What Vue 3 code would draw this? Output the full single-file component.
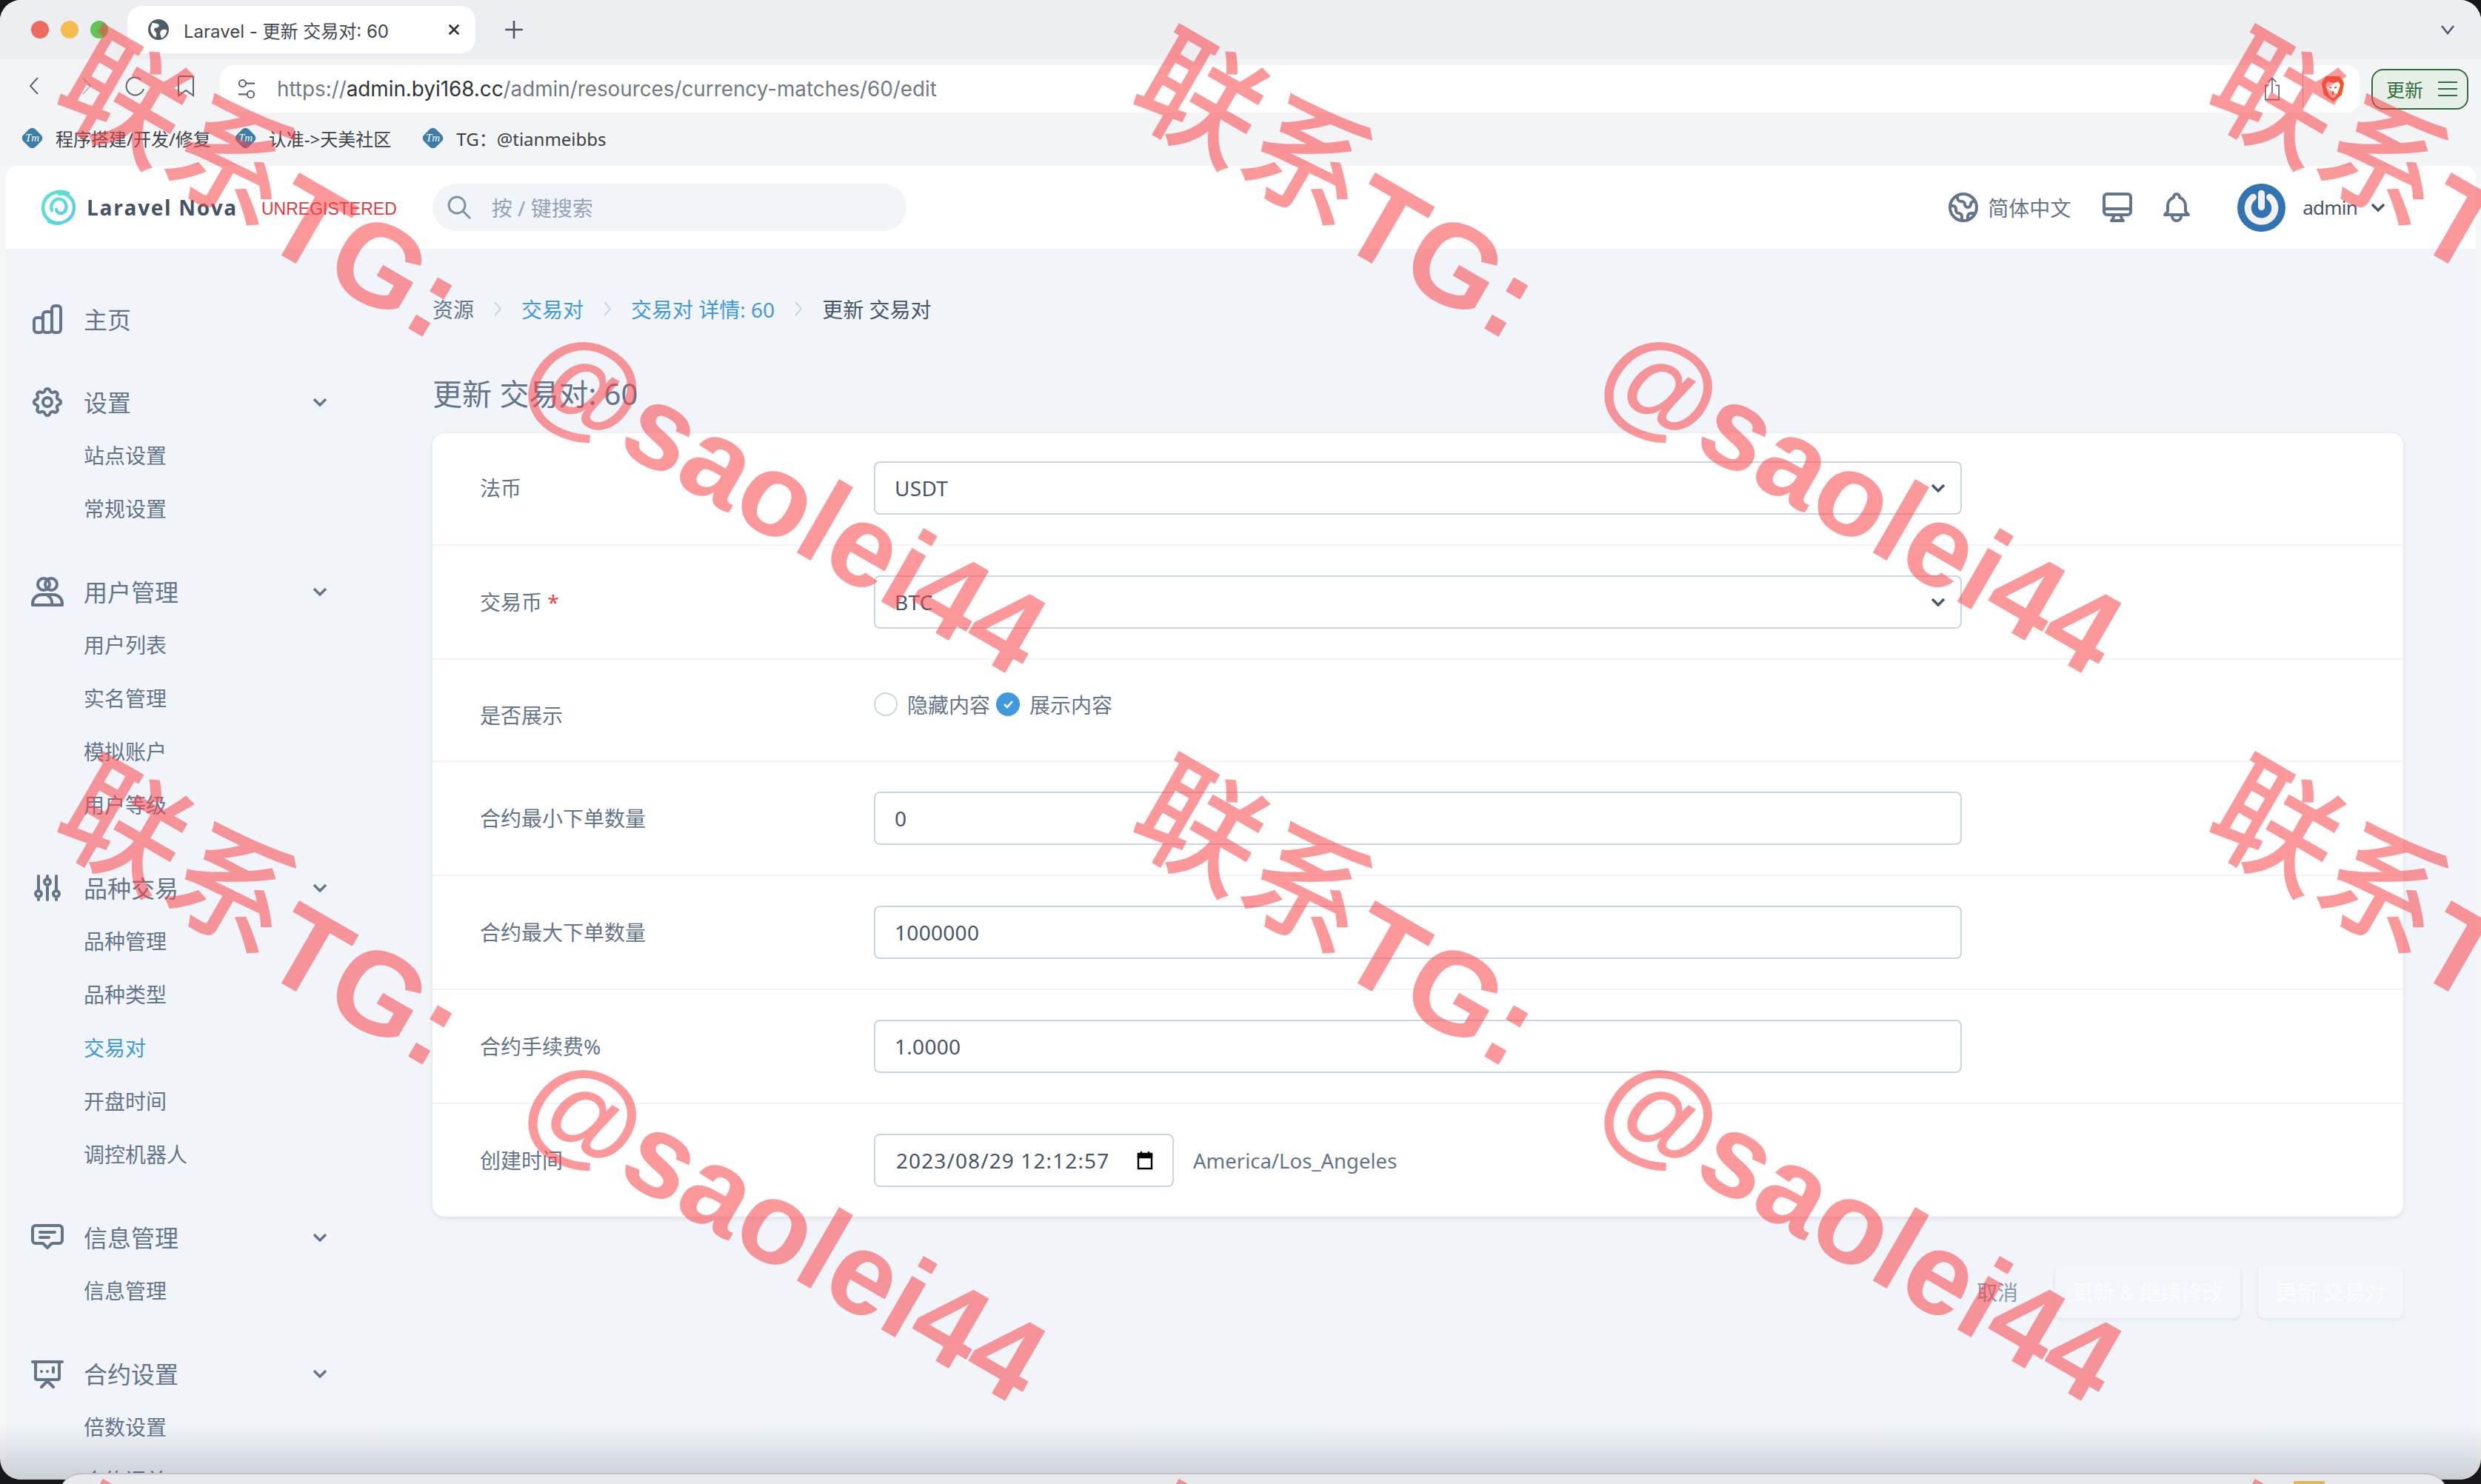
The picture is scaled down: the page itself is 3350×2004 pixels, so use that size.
<template>
  <div class="screen">
    <div class="window">
      <div class="tabstrip">
        <div class="lights">
          <span class="light red"></span>
          <span class="light yellow"></span>
          <span class="light green"></span>
        </div>
        <div class="tab">
          <svg class="tab-globe" viewBox="0 0 24 24"><circle cx="12" cy="12" r="12" fill="#4f5b66" /><path d="M5 4c3 1 5 0 7 2s-1 4-3 4-3 2-1 4 2 4 1 7C5 19 2 14 3 9zM15 13c3-2 5-1 7 0-1 4-3 7-6 9-2-3-3-7-1-9z" fill="#fff" /></svg>
          <span class="tab-title">Laravel - 更新 交易对: 60</span>
          <svg class="tab-close" viewBox="0 0 20 20"><path d="M3 3l14 14M17 3L3 17" /></svg>
        </div>
        <svg class="tab-plus" viewBox="0 0 24 24"><path d="M12 1v22M1 12h22" /></svg>
        <svg class="tab-menu" viewBox="0 0 20 14"><path d="M2 2l8 10 8-10" /></svg>
      </div>

      <div class="toolbar">
        <svg class="nav-icon back" viewBox="0 0 16 26"><path d="M13 2L3 13l10 11" /></svg>
        <svg class="nav-icon forward" viewBox="0 0 16 26"><path d="M3 2l10 11L3 24" /></svg>
        <svg class="nav-icon reload" viewBox="0 0 28 28"><path d="M21 5a12 12 0 1 0 4 13" /></svg>
        <svg class="nav-icon mark" viewBox="0 0 24 30"><path d="M2 4a2 2 0 0 1 2-2h16a2 2 0 0 1 2 2v24l-10-7-10 7z" /></svg>
        <div class="urlbar">
          <svg class="site-icon" viewBox="0 0 26 30"><circle cx="7" cy="7" r="5" /><circle cx="19" cy="23" r="5" /><path d="M12 7h13M1 23h13" /></svg>
          <span class="url"><span class="url-dim">https://</span>admin.byi168.cc<span class="url-dim">/admin/resources/currency-matches/60/edit</span></span>
          <svg class="share-icon" viewBox="0 0 24 36"><path d="M7 13H2v21h20V13h-5M12 24V2M6 8l6-6 6 6" /></svg>
          <span class="url-divider"></span>
          <svg class="brave" viewBox="0 0 32 36">
            <path d="M7 1h18l4 5 2 5-3 15-12 9-12-9L1 11l2-5z" fill="#f1571f" />
            <path d="M9 8l7 2 7-2 3 5-3 9-3 6-4 3-4-3-3-6-3-9z" fill="#fff" />
            <path d="M11 15l3 2M21 15l-3 2M16 21v5" stroke="#f1571f" stroke-width="2" fill="none" />
          </svg>
        </div>
        <div class="update-btn">
          <span>更新</span>
          <svg viewBox="0 0 28 22"><path d="M1 2h26M1 11h26M1 20h26" /></svg>
        </div>
      </div>

      <div class="bookmarks">
        <div v-for="mark in bookmarks" :key="mark" class="bookmark">
          <span class="tm"><i>Tm</i></span>
          <span>{{ mark }}</span>
        </div>
      </div>

      <div class="app">
        <header class="app-header">
          <svg class="logo" viewBox="0 0 46 48">
            <defs>
              <linearGradient id="nova" x1="0" y1="0" x2="1" y2="1">
                <stop offset="0" stop-color="#5be7c9" />
                <stop offset="1" stop-color="#5cc8f2" />
              </linearGradient>
            </defs>
            <g fill="none" stroke="url(#nova)" stroke-linecap="round" stroke-width="4.4">
              <path d="M36 5C22-1 3 6 2 24c0 14 12 23 24 21" />
              <path d="M10 43c14 7 34-1 34-19 0-12-10-20-20-18" />
              <path d="M14 28c-3-9 4-17 12-15 7 2 10 11 5 17-4 4-10 2-11-3" />
            </g>
          </svg>
          <span class="brand">Laravel Nova</span>
          <span class="unregistered">UNREGISTERED</span>
          <div class="search">
            <svg viewBox="0 0 32 32"><circle cx="13" cy="13" r="11" /><path d="M21 21l10 10" /></svg>
            <span>按 / 键搜索</span>
          </div>
          <div class="header-right">
            <svg class="head-icon globe" viewBox="0 0 24 24"><path d="M3.055 11H5a2 2 0 012 2v1a2 2 0 002 2 2 2 0 012 2v2.945M8 3.935V5.5A2.5 2.5 0 0010.5 8h.5a2 2 0 012 2 2 2 0 104 0 2 2 0 012-2h1.064M15 20.488V18a2 2 0 012-2h3.064M21 12a9 9 0 11-18 0 9 9 0 0118 0z" /></svg>
            <span class="lang">简体中文</span>
            <svg class="head-icon desktop" viewBox="0 0 24 24"><path d="M9.75 17L9 20l-1 1h8l-1-1-.75-3M3 13h18M5 17h14a2 2 0 002-2V5a2 2 0 00-2-2H5a2 2 0 00-2 2v10a2 2 0 002 2z" /></svg>
            <svg class="head-icon bell" viewBox="0 0 24 24"><path d="M15 17h5l-1.405-1.405A2.032 2.032 0 0118 14.158V11a6.002 6.002 0 00-4-5.659V5a2 2 0 10-4 0v.341C7.67 6.165 6 8.388 6 11v3.159c0 .538-.214 1.055-.595 1.436L4 17h5m6 0v1a3 3 0 11-6 0v-1m6 0H9" /></svg>
            <svg class="avatar" viewBox="0 0 64 64">
              <circle cx="32" cy="32" r="32" fill="#3273b4" />
              <path d="M21 18a18 18 0 1 0 22 0" fill="none" stroke="#f2f2f2" stroke-width="9" stroke-linecap="round" />
              <path d="M32 13v18" stroke="#f2f2f2" stroke-width="9" stroke-linecap="round" />
            </svg>
            <span class="user">admin</span>
            <svg class="user-chevron" viewBox="0 0 20 12"><path d="M2 2l8 8 8-8" /></svg>
          </div>
        </header>

        <div class="body">
          <aside class="sidebar">
            <div v-for="group in menu" :key="group.title" class="menu-group">
              <div class="menu-head">
                <svg class="menu-icon" viewBox="0 0 24 24" v-html="group.icon"></svg>
                <span>{{ group.title }}</span>
                <svg v-if="group.items.length" class="menu-chevron" viewBox="0 0 20 12"><path d="M2 2l8 8 8-8" /></svg>
              </div>
              <div
                v-for="item in group.items"
                :key="item"
                class="menu-item"
                :class="{ active: item === '交易对' }"
              >{{ item }}</div>
            </div>
          </aside>

          <main class="main">
            <nav class="crumbs">
              <template v-for="(crumb, i) in crumbs" :key="crumb.text">
                <svg v-if="i > 0" class="crumb-sep" viewBox="0 0 12 24"><path d="M2 3l8 9-8 9" /></svg>
                <span :class="{ link: crumb.link, current: i === crumbs.length - 1 }">{{ crumb.text }}</span>
              </template>
            </nav>
            <h1 class="title">更新 交易对: 60</h1>

            <div class="card">
              <div class="row first">
                <label>法币</label>
                <div class="input select">USDT<svg viewBox="0 0 20 12"><path d="M2 2l8 8 8-8" /></svg></div>
              </div>
              <div class="row">
                <label>交易币 <em>*</em></label>
                <div class="input select">BTC<svg viewBox="0 0 20 12"><path d="M2 2l8 8 8-8" /></svg></div>
              </div>
              <div class="row row-radio">
                <label>是否展示</label>
                <div class="radios">
                  <span class="radio"></span>
                  <span class="radio-text">隐藏内容</span>
                  <span class="radio checked"><svg viewBox="0 0 20 20"><path d="M5 10l4 4 7-8" /></svg></span>
                  <span class="radio-text">展示内容</span>
                </div>
              </div>
              <div v-for="field in numberFields" :key="field.label" class="row">
                <label>{{ field.label }}</label>
                <div class="input">{{ field.value }}</div>
              </div>
              <div class="row last">
                <label>创建时间</label>
                <div class="input date">
                  <span>2023/08/29 12:12:57</span>
                  <svg viewBox="0 0 22 26"><path d="M2 5h18v19H2zM6 1v5M16 1v5" /><path class="fill" d="M2 4h18v5H2z" /></svg>
                </div>
                <span class="zone">America/Los_Angeles</span>
              </div>
            </div>

            <div class="actions">
              <span class="cancel">取消</span>
              <span class="btn wide">更新 &amp; 继续修改</span>
              <span class="btn">更新 交易对</span>
            </div>
          </main>
        </div>
      </div>
      <div class="window-shade"></div>
    </div>

    <div class="back-window"><span class="back-chip"></span></div>

    <div class="watermarks">
      <span
        v-for="mark in watermarks"
        :key="mark.id"
        class="watermark"
        :style="{ left: mark.x + 'px', top: mark.y + 'px' }"
      ><span class="watermark-cjk">联系</span>TG: @saolei44</span>
    </div>
  </div>
</template>

<script setup>
const bookmarks = ['程序搭建/开发/修复', '认准->天美社区', 'TG：@tianmeibbs'];

const icons = {
  chart: '<path d="M9 19v-6a2 2 0 00-2-2H5a2 2 0 00-2 2v6a2 2 0 002 2h2a2 2 0 002-2zm0 0V9a2 2 0 012-2h2a2 2 0 012 2v10m-6 0a2 2 0 002 2h2a2 2 0 002-2m0 0V5a2 2 0 012-2h2a2 2 0 012 2v14a2 2 0 01-2 2h-2a2 2 0 01-2-2z"/>',
  cog: '<path d="M10.325 4.317c.426-1.756 2.924-1.756 3.35 0a1.724 1.724 0 002.573 1.066c1.543-.94 3.31.826 2.37 2.37a1.724 1.724 0 001.065 2.572c1.756.426 1.756 2.924 0 3.35a1.724 1.724 0 00-1.066 2.573c.94 1.543-.826 3.31-2.37 2.37a1.724 1.724 0 00-2.572 1.065c-.426 1.756-2.924 1.756-3.35 0a1.724 1.724 0 00-2.573-1.066c-1.543.94-3.31-.826-2.37-2.37a1.724 1.724 0 00-1.065-2.572c-1.756-.426-1.756-2.924 0-3.35a1.724 1.724 0 001.066-2.573c-.94-1.543.826-3.31 2.37-2.37.996.608 2.296.07 2.572-1.065z"/><path d="M15 12a3 3 0 11-6 0 3 3 0 016 0z"/>',
  users: '<circle cx="9.5" cy="7" r="4"/><circle cx="14.5" cy="7" r="4"/><path d="M2 21v-1a6 6 0 016-6h8a6 6 0 016 6v1zM12 14.5a6 6 0 013 6.5"/>',
  sliders: '<path d="M12 6V4m0 2a2 2 0 100 4m0-4a2 2 0 110 4m-6 8a2 2 0 100-4m0 4a2 2 0 110-4m0 4v2m0-6V4m6 6v10m6-2a2 2 0 100-4m0 4a2 2 0 110-4m0 4v2m0-6V4"/>',
  message: '<path d="M4 4h16a2 2 0 012 2v8a2 2 0 01-2 2h-5l-3 3-3-3H4a2 2 0 01-2-2V6a2 2 0 012-2zM7 8.5h10M7 12h6"/>',
  screen: '<path d="M2 4h20M4 4v11a1 1 0 001 1h14a1 1 0 001-1V4M8 21l4-4 4 4M8 10.5v.01M12 10.5v.01M16 8v3"/>'
};

const menu = [
  { title: '主页', icon: icons.chart, items: [] },
  { title: '设置', icon: icons.cog, items: ['站点设置', '常规设置'] },
  { title: '用户管理', icon: icons.users, items: ['用户列表', '实名管理', '模拟账户', '用户等级'] },
  { title: '品种交易', icon: icons.sliders, items: ['品种管理', '品种类型', '交易对', '开盘时间', '调控机器人'] },
  { title: '信息管理', icon: icons.message, items: ['信息管理'] },
  { title: '合约设置', icon: icons.screen, items: ['倍数设置', '合约调单'] }
];

const crumbs = [
  { text: '资源', link: false },
  { text: '交易对', link: true },
  { text: '交易对 详情: 60', link: true },
  { text: '更新 交易对', link: false }
];

const numberFields = [
  { label: '合约最小下单数量', value: '0' },
  { label: '合约最大下单数量', value: '1000000' },
  { label: '合约手续费%', value: '1.0000' }
];

// the watermark repeats on a fixed grid, so its tiles come from a loop
const watermarks = [];
for (let row = 0; row < 3; row++) {
  for (let col = 0; col < 3; col++) {
    watermarks.push({ id: row + '-' + col, x: 86 + col * 1453, y: 24 + row * 983 });
  }
}
</script>

<style>
html,
body {
  margin: 0;
  background: #000;
}
</style>

<style scoped>
.screen {
  position: relative;
  width: 3350px;
  height: 2004px;
  overflow: hidden;
  background: #17171c;
  font-family: "Noto Sans", "Noto Sans CJK SC", sans-serif;
  color: #64748b;
}

.window {
  position: relative;
  display: flex;
  flex-direction: column;
  height: 1998px;
  border-radius: 28px;
  overflow: hidden;
  background: #f5f6f8;
}

.tabstrip {
  display: flex;
  align-items: center;
  flex: none;
  height: 80px;
  background: #edeef2;
}

.lights {
  display: flex;
  gap: 16px;
  margin-left: 42px;
  margin-right: 26px;
}

.light {
  width: 24px;
  height: 24px;
  border-radius: 50%;
}

.red { background: #ee6a5e; }
.yellow { background: #f5bd4f; }
.green { background: #61c454; }

.tab {
  display: flex;
  align-items: center;
  width: 470px;
  height: 64px;
  padding: 0 20px 0 28px;
  box-sizing: border-box;
  border-radius: 20px;
  background: #fff;
}

.tab-globe {
  width: 28px;
  height: 28px;
}

.tab-title {
  flex: 1;
  margin-left: 20px;
  font-family: "Inter", "Noto Sans CJK SC", sans-serif;
  font-size: 24px;
  color: #3f4650;
}

.tab-close {
  width: 18px;
  height: 18px;
  fill: none;
  stroke: #333;
  stroke-width: 3;
}

.tab-plus {
  width: 26px;
  height: 26px;
  margin-left: 39px;
  fill: none;
  stroke: #4d5560;
  stroke-width: 2.4;
}

.tab-menu {
  width: 20px;
  height: 14px;
  margin-left: auto;
  margin-right: 35px;
  fill: none;
  stroke: #4f5a66;
  stroke-width: 2.6;
}

.toolbar {
  display: flex;
  align-items: center;
  flex: none;
  height: 72px;
  padding-right: 17px;
  background: #f3f4f6;
}

.nav-icon {
  flex: none;
  fill: none;
  stroke: #5a6572;
  stroke-width: 2;
}

.back {
  width: 16px;
  height: 26px;
  margin-left: 38px;
}

.forward {
  width: 16px;
  height: 26px;
  margin-left: 55px;
  stroke: #b7bfc9;
}

.reload {
  width: 28px;
  height: 28px;
  margin-left: 44px;
}

.mark {
  width: 24px;
  height: 30px;
  margin-left: 42px;
}

.urlbar {
  display: flex;
  align-items: center;
  flex: 1;
  height: 64px;
  margin-left: 34px;
  margin-top: 8px;
  border-radius: 18px;
  background: #fff;
}

.site-icon {
  width: 24px;
  height: 28px;
  margin-left: 24px;
  fill: none;
  stroke: #5d6670;
  stroke-width: 2.2;
}

.url {
  flex: 1;
  margin-left: 29px;
  font-family: "Inter", sans-serif;
  font-size: 27.8px;
  color: #2f343a;
}

.url-dim {
  color: #727a84;
}

.share-icon {
  width: 22px;
  height: 34px;
  fill: none;
  stroke: #5f6670;
  stroke-width: 1.8;
}

.url-divider {
  width: 1px;
  height: 50px;
  margin: 0 24px 0 30px;
  background: #aab0b8;
}

.brave {
  width: 32px;
  height: 36px;
  margin-right: 20px;
}

.update-btn {
  display: flex;
  align-items: center;
  justify-content: space-between;
  width: 131px;
  height: 55px;
  margin-left: 16px;
  margin-top: 8px;
  padding: 0 12px 0 18px;
  box-sizing: border-box;
  border: 2px solid #336b3e;
  border-radius: 16px;
  background: #e6efe8;
  font-size: 25px;
  color: #336b3e;
}

.update-btn svg {
  width: 28px;
  height: 22px;
  fill: none;
  stroke: #336b3e;
  stroke-width: 2;
}

.bookmarks {
  display: flex;
  align-items: center;
  flex: none;
  height: 72px;
  padding: 0 0 3px 29px;
  box-sizing: border-box;
  background: #f3f4f6;
  font-size: 24px;
  color: #3c4148;
}

.bookmark {
  display: flex;
  align-items: center;
  gap: 17px;
}

.bookmark:nth-child(1) {
  margin-right: 32px;
}

.bookmark:nth-child(2) {
  margin-right: 42px;
}

.tm {
  display: flex;
  align-items: center;
  justify-content: center;
  width: 23px;
  height: 23px;
  margin: 0 3px;
  border-radius: 6px;
  background: #3c7ea8;
  transform: rotate(45deg);
  color: #fff;
  font-family: "Liberation Serif", serif;
  font-size: 15px;
}

.tm i {
  transform: rotate(-45deg);
}

.app {
  display: flex;
  flex: 1;
  flex-direction: column;
  min-height: 0;
  margin: 0 7px 0 8px;
  border-radius: 16px 16px 0 0;
  overflow: hidden;
  background: #f1f5fa;
}

.app-header {
  display: flex;
  align-items: center;
  flex: none;
  height: 112px;
  background: #fff;
}

.logo {
  width: 46px;
  height: 48px;
  margin-left: 48px;
}

.brand {
  margin-left: 15px;
  font-family: "Open Sans", sans-serif;
  font-size: 28px;
  font-weight: 700;
  letter-spacing: 1.7px;
  color: #465365;
}

.unregistered {
  margin-left: 32px;
  margin-top: 4px;
  font-family: "Liberation Sans", sans-serif;
  font-size: 23px;
  color: #e0393e;
}

.search {
  display: flex;
  align-items: center;
  width: 640px;
  height: 64px;
  margin-left: 48px;
  border-radius: 32px;
  background: #f1f5f9;
  font-size: 28px;
  color: #94a3b8;
}

.search svg {
  width: 32px;
  height: 32px;
  margin-left: 20px;
  margin-right: 28px;
  fill: none;
  stroke: #8492a6;
  stroke-width: 3;
}

.header-right {
  display: flex;
  align-items: center;
  margin-left: auto;
  margin-right: 122px;
}

.head-icon {
  fill: none;
  stroke: #64748b;
  stroke-width: 2;
  stroke-linecap: round;
  stroke-linejoin: round;
}

.globe {
  width: 48px;
  height: 48px;
}

.lang {
  margin-left: 9px;
  font-size: 28px;
}

.desktop {
  width: 48px;
  height: 48px;
  margin-left: 39px;
}

.bell {
  width: 48px;
  height: 48px;
  margin-left: 32px;
}

.avatar {
  width: 65px;
  height: 65px;
  margin-left: 58px;
}

.user {
  margin-left: 23px;
  font-size: 26px;
  letter-spacing: -0.8px;
  color: #475569;
}

.user-chevron {
  width: 20px;
  height: 12px;
  margin-left: 18px;
  fill: none;
  stroke: #475569;
  stroke-width: 3.4;
}

.body {
  display: flex;
  flex: 1;
  min-height: 0;
}

.sidebar {
  flex: none;
  width: 576px;
  padding: 59px 0 0 36px;
  box-sizing: border-box;
}

.menu-group {
  width: 398px;
  margin-bottom: 40px;
}

.menu-head {
  display: flex;
  align-items: center;
  height: 72px;
  padding-bottom: 3px;
  box-sizing: border-box;
  font-size: 32px;
  color: #64748b;
}

.menu-icon {
  width: 48px;
  height: 48px;
  margin: 3px 25px 0 -4px;
  fill: none;
  stroke: #64748b;
  stroke-width: 2;
  stroke-linecap: round;
  stroke-linejoin: round;
}

.menu-chevron {
  width: 20px;
  height: 12px;
  margin-left: auto;
  margin-top: 3px;
  fill: none;
  stroke: #64748b;
  stroke-width: 3.4;
}

.menu-item {
  height: 72px;
  padding-left: 69px;
  font-size: 28px;
  line-height: 72px;
  color: #64748b;
}

.menu-item.active {
  color: #4099de;
}

.main {
  width: 2661px;
}

.crumbs {
  display: flex;
  align-items: center;
  height: 40px;
  margin-top: 61px;
  font-size: 28px;
  color: #64748b;
}

.crumb-sep {
  width: 12px;
  height: 24px;
  margin: 0 26px;
  fill: none;
  stroke: #cbd5e1;
  stroke-width: 2;
}

.crumbs .link {
  color: #4099de;
}

.crumbs .current {
  color: #475569;
}

.title {
  height: 56px;
  margin: 67px 0 25px;
  font-size: 40px;
  font-weight: 400;
  line-height: 56px;
  color: #64748b;
}

.card {
  border-radius: 16px;
  background: #fff;
  box-shadow: 0 2px 6px rgba(15, 23, 42, 0.1);
}

.row {
  display: flex;
  align-items: center;
  padding: 40px 0;
  border-bottom: 2px solid #f1f5f9;
  font-size: 28px;
}

.row.first {
  padding-top: 38px;
}

.row.last {
  border-bottom: none;
}

.row label {
  flex: none;
  width: 532px;
  padding-left: 64px;
  line-height: 40px;
  color: #64748b;
}

.row label em {
  font-style: normal;
  color: #ef4444;
}

.input {
  position: relative;
  display: flex;
  align-items: center;
  justify-content: space-between;
  width: 1469px;
  height: 72px;
  padding: 0 20px 0 26px;
  box-sizing: border-box;
  border: 2px solid #cbd5e1;
  border-radius: 8px;
  font-size: 28px;
  letter-spacing: 0.3px;
  color: #475569;
}

.select svg {
  width: 20px;
  height: 12px;
  fill: none;
  stroke: #475569;
  stroke-width: 3.4;
}

.row-radio {
  align-items: flex-start;
  height: 136px;
  padding: 0;
  box-sizing: content-box;
}

.row-radio label {
  margin-top: 55px;
}

.radios {
  display: flex;
  align-items: center;
  height: 40px;
  margin-top: 40px;
}

.radio {
  display: flex;
  align-items: center;
  justify-content: center;
  width: 32px;
  height: 32px;
  box-sizing: border-box;
  border: 2px solid #cbd5e1;
  border-radius: 50%;
  background: #fff;
}

.radio.checked {
  border: none;
  background: #4099de;
}

.radio svg {
  width: 20px;
  height: 20px;
  fill: none;
  stroke: #fff;
  stroke-width: 2.6;
}

.radio-text {
  margin: 0 8px 0 13px;
  color: #64748b;
}

.date {
  width: 405px;
  padding: 0 26px 0 28px;
  letter-spacing: 1.1px;
}

.date svg {
  flex: none;
  width: 22px;
  height: 26px;
  fill: none;
  stroke: #000;
  stroke-width: 2.4;
}

.date .fill {
  fill: #000;
}

.zone {
  margin-left: 26px;
  font-size: 27.5px;
  color: #64748b;
}

.actions {
  display: flex;
  align-items: center;
  margin-top: 65px;
}

.cancel {
  margin-left: auto;
  margin-right: 50px;
  font-size: 28px;
  color: #8898ad;
}

.btn {
  display: flex;
  align-items: center;
  justify-content: center;
  width: 196px;
  height: 72px;
  border-radius: 8px;
  background: #f2f5fa;
  box-shadow: 0 2px 5px rgba(15, 23, 42, 0.08);
  font-size: 28px;
  font-weight: 500;
  color: #f9fbfd;
}

.btn.wide {
  width: 250px;
  margin-right: 24px;
}

.window-shade {
  position: absolute;
  left: 0;
  right: 0;
  bottom: 0;
  height: 75px;
  background: linear-gradient(to bottom, rgba(30, 35, 50, 0), rgba(30, 35, 50, 0.18));
  pointer-events: none;
}

.back-window {
  position: absolute;
  left: 80px;
  right: 45px;
  top: 1989px;
  height: 40px;
  box-sizing: border-box;
  border-top: 2px solid #bfc1c6;
  border-radius: 30px 30px 0 0;
  background: #e8e9ec;
}

.back-chip {
  position: absolute;
  left: 3017px;
  top: 9px;
  width: 42px;
  height: 12px;
  background: #e3b55a;
}

.watermarks {
  position: absolute;
  inset: 0;
  overflow: hidden;
  pointer-events: none;
}

.watermark {
  position: absolute;
  transform: rotate(30deg);
  transform-origin: left center;
  font-family: "Liberation Sans", "Noto Sans CJK SC", sans-serif;
  font-size: 158px;
  font-weight: 700;
  line-height: 1;
  word-spacing: 87px;
  white-space: nowrap;
  color: rgba(250, 70, 75, 0.56);
}

.watermark-cjk {
  position: relative;
  top: -16px;
  font-size: 168px;
  font-weight: 500;
}
</style>
